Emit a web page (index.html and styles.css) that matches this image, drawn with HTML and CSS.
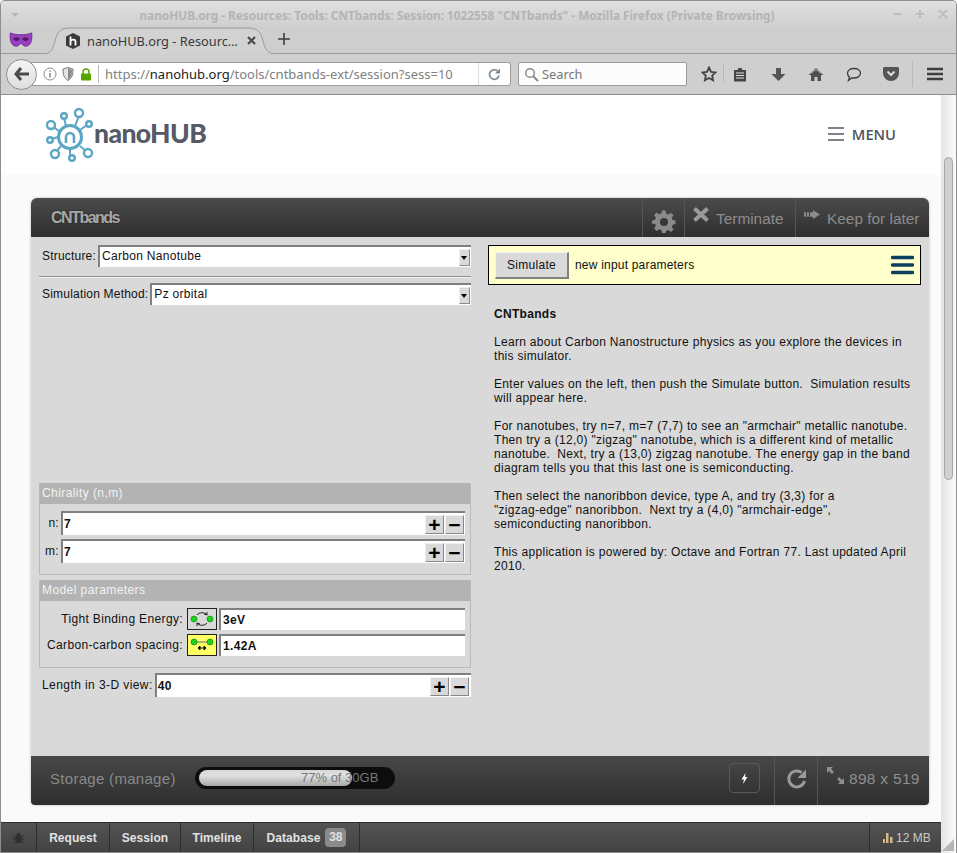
FILE: index.html
```html
<!DOCTYPE html>
<html lang="en">
<head>
	<meta charset="utf-8">
	<title>nanoHUB.org - Resources: Tools: CNTbands</title>
	<link rel="stylesheet" href="styles.css">
</head>
<body>
<div class="window">
	<div class="titlebar">
		<svg class="title-arrow" width="10" height="6" viewBox="0 0 10 6"><path d="M1 1h8L5 5z" fill="#b5b5b5"/></svg>
		<div class="title-text">nanoHUB.org - Resources: Tools: CNTbands: Session: 1022558 "CNTbands" - Mozilla Firefox (Private Browsing)</div>
		<div class="title-btns">
			<svg width="60" height="12" viewBox="0 0 60 12" fill="none" stroke="#bdbdbd" stroke-width="2"><path d="M1 6h8M23 6h8M27 2v8M46 2l8 8M54 2l-8 8"/></svg>
		</div>
	</div>

	<div class="tabbar">
		<svg class="mask" width="24" height="16" viewBox="0 0 26 18"><path d="M1 1c5 2 8 2 12 2s7 0 12-2c1 8-1 15-7 15-3 0-3-3-5-3s-2 3-5 3C2 16 0 9 1 1z" fill="#9b3fc2" stroke="#6d2a8c"/><ellipse cx="8" cy="8" rx="3.5" ry="2" fill="#4c1d66"/><ellipse cx="18" cy="8" rx="3.5" ry="2" fill="#4c1d66"/></svg>
		<div class="tab">
			<svg class="tab-shape" width="234" height="28" viewBox="0 0 234 28"><path d="M0 27C8 27 10 22 12 14 14 5 18 1 26 1H206C214 1 218 5 220 14 222 22 224 27 234 27" fill="#d2d2d2" stroke="#9a9a9a"/></svg>
			<svg class="favicon" width="16" height="16" viewBox="0 0 16 16"><path d="M8 0l7 3.5v9L8 16l-7-3.5v-9z" fill="#3a3a3a"/><path d="M5.5 3.5v9M5.5 8c1-2 5-2 5 .5v4" fill="none" stroke="#fff" stroke-width="1.8"/></svg>
			<span class="tab-label">nanoHUB.org - Resourc…</span>
			<svg class="tab-close" width="9" height="9" viewBox="0 0 9 9"><path d="M1 1l7 7M8 1L1 8" stroke="#4a4a4a" stroke-width="2.2"/></svg>
		</div>
		<svg class="tab-plus" width="12" height="12" viewBox="0 0 12 12"><path d="M6 0v12M0 6h12" stroke="#3d3d3d" stroke-width="1.6"/></svg>
	</div>

	<div class="navbar">
		<div class="back"><svg width="16" height="14" viewBox="0 0 16 14"><path d="M7 1L2 7l5 6M2 7h13" fill="none" stroke="#4a4a4a" stroke-width="3"/></svg></div>
		<div class="urlbar">
			<svg class="ic-info" width="14" height="14" viewBox="0 0 14 14" fill="none"><circle cx="7" cy="7" r="6" stroke="#8c8c8c"/><path d="M7 6v4.5M7 3.5v1.3" stroke="#7a7a7a" stroke-width="1.4"/></svg>
			<svg class="ic-shield" width="12" height="14" viewBox="0 0 12 14"><path d="M1 2l5-1.500 5 1.500c0 6-1 9-5 11.500C2 11 1 8 1 2z" fill="#e6e6e6" stroke="#777"/><path d="M6 1v12c3-2 4-5 4-10z" fill="#8a8a8a"/></svg>
			<svg class="ic-lock" width="12" height="13" viewBox="0 0 12 13"><rect x="1" y="5.500" width="10" height="7" rx="1" fill="#57a300"/><path d="M3 6V4a3 3 0 0 1 6 0v2" fill="none" stroke="#57a300" stroke-width="1.500"/></svg>
			<div class="url-text">https://<b>nanohub.org</b>/tools/cntbands-ext/session?sess=102</div>
			<div class="url-reload"><svg width="13" height="13" viewBox="0 0 13 13" fill="none"><path d="M11 7.500A4.800 4.800 0 1 1 9.500 3" stroke="#7d8a94" stroke-width="1.700"/><path d="M12 .5v5H7z" fill="#7d8a94"/></svg></div>
		</div>
		<div class="searchbar">
			<svg width="15" height="15" viewBox="0 0 15 15" fill="none"><circle cx="6" cy="6" r="4.300" stroke="#8b8b8b" stroke-width="1.500"/><path d="M9 9l5 5" stroke="#8b8b8b" stroke-width="2"/></svg>
			<span>Search</span>
		</div>
		<div class="tools">
			<svg class="t-star" width="16" height="16" viewBox="0 0 16 16"><path d="M8 1.500l2 4.300 4.600.6-3.400 3.200.9 4.700L8 12l-4.100 2.300.9-4.700L1.400 6.400 6 5.800z" fill="none" stroke="#444" stroke-width="1.800"/></svg>
			<i class="t-sep"></i>
			<svg class="t-clip" width="14" height="15" viewBox="0 0 14 15"><path d="M1 3h3.500l1-2h3l1 2H13v11.500H1z" fill="#444"/><path d="M3 6h8M3 8.500h8M3 11h8" stroke="#ddd"/></svg>
			<svg class="t-down" width="15" height="15" viewBox="0 0 15 15"><path d="M5 1h5v6h4.500l-7 7-7-7H5z" fill="#555"/></svg>
			<svg class="t-home" width="16" height="15" viewBox="0 0 16 15"><path d="M8 1L.5 8H3v6h3.500v-4h3v4H13V8h2.500z" fill="#4f4f4f"/><path d="M2.500 6.500L8 2.500l5.500 4" fill="none" stroke="#d0d0d0" stroke-width=".8"/></svg>
			<svg class="t-chat" width="16" height="15" viewBox="0 0 16 15"><path d="M8 1.500c3.700 0 6.500 2 6.500 4.700S11.700 11 8 11c-.7 0-1.400 0-2-.2L2.500 13.500l1-3.500C2.300 9 1.500 7.700 1.500 6.200 1.500 3.500 4.300 1.500 8 1.500z" fill="none" stroke="#3c3c3c" stroke-width="1.300"/></svg>
			<svg class="t-pocket" width="16" height="14" viewBox="0 0 16 14"><path d="M1.500 0h13A1.500 1.500 0 0 1 16 1.500V6a8 8 0 0 1-16 0V1.500A1.500 1.500 0 0 1 1.500 0z" fill="#555"/><path d="M4.500 4.500L8 8l3.500-3.500" fill="none" stroke="#ddd" stroke-width="2"/></svg>
			<i class="t-sep t-sep-last"></i>
			<svg class="t-menu" width="16" height="14" viewBox="0 0 16 14"><path d="M0 2h16M0 7h16M0 12h16" stroke="#3f3f3f" stroke-width="2.400"/></svg>
		</div>
	</div>

	<div class="viewport">
		<div class="page">
			<header class="site-header">
				<a class="logo">
					<svg width="52" height="58" viewBox="44 106 52 58" fill="none" stroke="#5ba6c4">
						<circle cx="70" cy="137" r="11.500" stroke-width="3"/>
						<path d="M75 126l4-10M66 126l-2-8M80 130l7-5M59 131l-7-5M58 137l-6 2M61 146l-5 6M70 149v6M80 146l6 5" stroke-width="2"/>
						<g stroke-width="2.400" fill="#fff">
							<circle cx="79" cy="113" r="4"/><circle cx="64" cy="116" r="2.800"/><circle cx="89" cy="124" r="2.800"/>
							<circle cx="51" cy="125" r="4"/><circle cx="50" cy="140" r="2.800"/><circle cx="55" cy="154" r="4"/>
							<circle cx="72" cy="158" r="2.800"/><circle cx="88" cy="153" r="4"/>
						</g>
						<path d="M66 143v-6a4 4 0 0 1 8 0v6" stroke-width="2.600"/>
					</svg>
					<span class="logo-name">nanoHUB</span>
				</a>
				<a class="menu-link">
					<svg width="16" height="14" viewBox="0 0 16 14"><path d="M0 1h16M0 7h16M0 13h16" stroke="#555a66" stroke-width="1.600"/></svg>
					<span>MENU</span>
				</a>
			</header>

			<main class="content">
				<section class="panel">
					<div class="panel-head">
						<h1 class="panel-title">CNTbands</h1>
						<div class="head-actions">
							<div class="head-btn btn-gear">
								<svg width="24" height="24" viewBox="0 0 24 24"><path d="M10 0h4l.7 3.500 2.300 1 3-2 2.800 2.800-2 3 1 2.300L25 11v4l-3.200.7-1 2.300 2 3-2.800 2.800-3-2-2.300 1L14 25h-4l-.7-3.200-2.300-1-3 2-2.800-2.800 2-3-1-2.300L-1 15v-4l3.200-.7 1-2.300-2-3L4 2.200l3 2 2.300-1z" fill="#8a8a8a" transform="translate(1 .5) scale(.9)"/><circle cx="12" cy="12" r="4" fill="#383838"/></svg>
							</div>
							<div class="head-btn btn-term">
								<svg width="18" height="17" viewBox="0 0 18 17"><path d="M2.500 2.500l13 12M15.500 2.500l-13 12" stroke="#9a9a9a" stroke-width="4"/></svg>
								<span>Terminate</span>
							</div>
							<div class="head-btn btn-keep">
								<svg width="17" height="9" viewBox="0 0 17 12" preserveAspectRatio="none"><path d="M0 3h2v6H0zM3 3h2v6H3zM6 3h3V0l7 6-7 6V9H6z" fill="#8c8c8c"/></svg>
								<span>Keep for later</span>
							</div>
						</div>
					</div>

					<div class="panel-body">
						<div class="inputs">
							<div class="row row-top">
								<label>Structure:</label>
								<div class="combo"><span>Carbon Nanotube</span><i class="combo-arrow"></i></div>
							</div>
							<div class="divider"></div>
							<div class="row row-top">
								<label>Simulation Method:</label>
								<div class="combo"><span>Pz orbital</span><i class="combo-arrow"></i></div>
							</div>

							<div class="group group-chirality">
								<div class="group-title">Chirality (n,m)</div>
								<div class="group-body">
									<div class="row row-n">
										<label>n:</label>
										<div class="spin"><b>7</b><i class="sbtn">+</i><i class="sbtn">−</i></div>
									</div>
									<div class="row row-n">
										<label>m:</label>
										<div class="spin"><b>7</b><i class="sbtn">+</i><i class="sbtn">−</i></div>
									</div>
								</div>
							</div>

							<div class="group group-model">
								<div class="group-title">Model parameters</div>
								<div class="group-body">
									<div class="row row-param">
										<label>Tight Binding Energy:</label>
										<div class="pic">
											<svg width="24" height="16" viewBox="0 0 24 16"><path d="M7 4c2-3 8-3 10 0M14 3l3 1 0-3M17 12c-2 3-8 3-10 0M10 13l-3-1 0 3" fill="none" stroke="#222"/><circle cx="4" cy="8" r="3" fill="#1bd41b" stroke="#0a7a0a" stroke-width=".6"/><circle cx="20" cy="8" r="3" fill="#1bd41b" stroke="#0a7a0a" stroke-width=".6"/></svg>
										</div>
										<div class="field"><b>3eV</b></div>
									</div>
									<div class="row row-param">
										<label>Carbon-carbon spacing:</label>
										<div class="pic pic-on">
											<svg width="24" height="16" viewBox="0 0 24 16"><path d="M4 5h16" stroke="#666"/><path d="M8 11h8M8 11l2-2v4zM16 11l-2-2v4z" stroke="#111"/><circle cx="4" cy="5" r="3" fill="#1bd41b" stroke="#0a7a0a" stroke-width=".6"/><circle cx="20" cy="5" r="3" fill="#1bd41b" stroke="#0a7a0a" stroke-width=".6"/></svg>
										</div>
										<div class="field"><b>1.42A</b></div>
									</div>
								</div>
							</div>

							<div class="row row-length">
								<label>Length in 3-D view:</label>
								<div class="spin"><b>40</b><i class="sbtn">+</i><i class="sbtn">−</i></div>
							</div>
						</div>

						<div class="results">
							<div class="simbar">
								<div class="sim-btn">Simulate</div>
								<span class="sim-note">new input parameters</span>
								<svg class="sim-menu" width="23" height="20" viewBox="0 0 23 20"><path d="M1.500 2.500h20M1.500 10h20M1.500 17.500h20" stroke="#0b415f" stroke-width="3.400" stroke-linecap="round"/></svg>
							</div>
							<div class="about">
								<p><b>CNTbands</b></p>
								<p>Learn about Carbon Nanostructure physics as you explore the devices in<br>this simulator.</p>
								<p>Enter values on the left, then push the Simulate button.&nbsp; Simulation results<br>will appear here.</p>
								<p>For nanotubes, try n=7, m=7 (7,7) to see an "armchair" metallic nanotube.<br>Then try a (12,0) "zigzag" nanotube, which is a different kind of metallic<br>nanotube.&nbsp; Next, try a (13,0) zigzag nanotube. The energy gap in the band<br>diagram tells you that this last one is semiconducting.</p>
								<p>Then select the nanoribbon device, type A, and try (3,3) for a<br>"zigzag-edge" nanoribbon.&nbsp; Next try a (4,0) "armchair-edge",<br>semiconducting nanoribbon.</p>
								<p>This application is powered by: Octave and Fortran 77. Last updated April<br>2010.</p>
							</div>
						</div>
					</div>

					<div class="panel-foot">
						<span class="storage-label">Storage (manage)</span>
						<div class="meter">
							<div class="meter-fill"></div>
							<span class="meter-text">77% of 30GB</span>
						</div>
						<div class="foot-right">
							<div class="flash"><svg width="7" height="11" viewBox="0 0 7 11"><path d="M4.500 0L.5 6.500H3L2 11l4.500-7H4z" fill="#fff"/></svg></div>
							<div class="foot-reload"><svg width="22" height="22" viewBox="0 0 22 22" fill="none"><path d="M18.500 13A8 8 0 1 1 15.500 4.500" stroke="#9a9a9a" stroke-width="3"/><path d="M20 1.500V10h-8.500z" fill="#9a9a9a"/></svg></div>
							<div class="foot-size">
								<svg width="17" height="17" viewBox="0 0 17 17"><path d="M0 0h6L4 2l3 3-2 2-3-3-2 2zM17 17h-6l2-2-3-3 2-2 3 3 2-2z" fill="#8f8f8f"/></svg>
								<span>898 x 519</span>
							</div>
						</div>
					</div>
				</section>
			</main>

			<footer class="debugbar">
				<div class="dbg dbg-bug"><svg width="13" height="12" viewBox="0 0 13 12"><ellipse cx="6.500" cy="7" rx="3.200" ry="4.200" fill="#2e2e2e"/><circle cx="6.500" cy="2.500" r="1.800" fill="#2e2e2e"/><path d="M1 3l3 2M12 3L9 5M.5 7h3M12.500 7h-3M1 11l3-2M12 11L9 9" stroke="#2e2e2e"/></svg></div>
				<div class="dbg dbg-request">Request</div>
				<div class="dbg dbg-session">Session</div>
				<div class="dbg dbg-timeline">Timeline</div>
				<div class="dbg dbg-database">Database <span class="badge">38</span></div>
				<div class="dbg-mem">
					<svg width="10" height="10" viewBox="0 0 10 10"><path d="M0 6h2v4H0zM3 0h2.500v10H3zM7 4h2.500v6H7z" fill="#d6b98a"/></svg>
					<span>12 MB</span>
				</div>
			</footer>
		</div>

		<div class="scrollbar"><div class="thumb"></div></div>
		<svg class="grip" width="14" height="14" viewBox="0 0 14 14"><path d="M1 13L13 1v12z" fill="#b5b5b5"/></svg>
	</div>
</div>
</body>
</html>
```

FILE: styles.css
```css
*{
	margin: 0;
	box-sizing: border-box;
}

body{
	margin: 0;
	width: 957px;
	height: 853px;
	overflow: hidden;
	font-family: 'Liberation Sans', sans-serif;
	background: #fff;
}

.window{
	display: flex;
	flex-direction: column;
	height: 853px;
	border: 1px solid #8e8e8e;
	border-bottom: 0;
	border-radius: 5px 5px 0 0;
	overflow: hidden;
}

/* title bar */
.titlebar{
	display: flex;
	align-items: center;
	height: 26px;
	padding: 1px 0 0 9px;
	background: linear-gradient(180deg, #e0e0e0 0%, #cfcfcf 100%);
}

.title-arrow{
	flex: none;
}

.title-text{
	flex: 1;
	text-align: center;
	font: 700 11.8px 'Noto Sans', sans-serif;
	color: #b4b4b4;
	white-space: nowrap;
	padding-left: 16px;
}

.title-btns{
	flex: none;
	width: 78px;
	padding-left: 15px;
}

/* tabs */
.tabbar{
	display: flex;
	align-items: flex-end;
	height: 27px;
	background: #cecece;
	border-bottom: 1px solid #9a9a9a;
	position: relative;
}

.mask{
	flex: none;
	margin: 0 0 5px 8px;
}

.tab{
	position: relative;
	display: flex;
	align-items: center;
	width: 234px;
	height: 27px;
	margin: 0 0 -1px 10px;
	padding: 0 0 0 22px;
}

.tab-shape{
	position: absolute;
	left: 0;
	top: 0;
}

.favicon,
.tab-label,
.tab-close{
	position: relative;
	flex: none;
}

.tab-label{
	width: 153px;
	margin-left: 6px;
	font: 12.8px 'Noto Sans', sans-serif;
	color: #3a3a3a;
	white-space: nowrap;
}

.tab-close{
	margin-left: 7px;
}

.tab-plus{
	flex: none;
	margin: 0 0 8px 1px;
}

/* nav */
.navbar{
	display: flex;
	align-items: center;
	height: 41px;
	padding: 0 0 0 5px;
	background: #cfcfcf;
	border-bottom: 1px solid #8f8f8f;
	position: relative;
}

.back{
	position: relative;
	z-index: 1;
	display: flex;
	align-items: center;
	justify-content: center;
	flex: none;
	width: 31px;
	height: 31px;
	border: 1px solid #8f8f8f;
	border-radius: 50%;
	background: linear-gradient(180deg, #f4f4f4, #dedede);
}

.urlbar{
	display: flex;
	align-items: center;
	flex: none;
	width: 480px;
	height: 24px;
	margin-left: -6px;
	padding-left: 12px;
	background: #fff;
	border: 1px solid #9b9b9b;
	border-left: 0;
	border-radius: 0 3px 3px 0;
}

.ic-shield{
	margin-left: 5px;
}

.ic-lock{
	margin-left: 6px;
}

.url-text{
	flex: none;
	width: 355px;
	height: 18px;
	overflow: hidden;
	margin-left: 6px;
	padding-left: 6px;
	border-left: 1px solid #bbb;
	font: 13px/18px 'Noto Sans', sans-serif;
	color: #808080;
	white-space: nowrap;
}

.url-text b{
	font-weight: 400;
	color: #222;
}

.url-reload{
	display: flex;
	align-items: center;
	justify-content: center;
	flex: 1;
	height: 22px;
	margin-left: 25px;
	border-left: 1px solid #ddd;
}

.searchbar{
	display: flex;
	align-items: center;
	gap: 3px;
	flex: none;
	width: 169px;
	height: 24px;
	margin-left: 7px;
	padding-left: 5px;
	background: #fcfcfc;
	border: 1px solid #9b9b9b;
	border-radius: 2px;
	font: 12.8px 'Noto Sans', sans-serif;
	color: #777;
}

.tools{
	display: flex;
	align-items: center;
	flex: none;
	height: 100%;
	margin-left: 14px;
}

.t-sep{
	display: block;
	flex: none;
	width: 1px;
	height: 18px;
	margin: 0 9px 0 6px;
	background: #b7b7b7;
}

.t-down{
	margin-left: 24px;
}

.t-home{
	margin-left: 22px;
}

.t-chat{
	margin-left: 22px;
}

.t-pocket{
	margin-left: 21px;
}

.t-sep-last{
	height: 26px;
	margin: 0 14px 0 13px;
}

/* page */
.viewport{
	position: relative;
	display: flex;
	flex: 1;
	min-height: 0;
}

.page{
	display: flex;
	flex-direction: column;
	width: 940px;
	background: #fafafa;
}

.site-header{
	display: flex;
	align-items: center;
	justify-content: space-between;
	flex: none;
	height: 80px;
	padding: 0 45px 0 43px;
	background: #fff;
}

.logo{
	display: flex;
	align-items: center;
}

.logo-name{
	margin: -4px 0 0 -2px;
	font: 900 26.5px 'Lato', sans-serif;
	color: #555a66;
	letter-spacing: -0.6px;
}

.menu-link{
	display: flex;
	align-items: center;
	gap: 8px;
	margin-top: -2px;
	font: 600 14.7px 'Open Sans', sans-serif;
	color: #4f5560;
}

.content{
	flex: 1;
	min-height: 0;
	padding: 23px 12px 0 30px;
}

.panel{
	display: flex;
	flex-direction: column;
	height: 607px;
	border-radius: 6px 6px 4px 4px;
	overflow: hidden;
	box-shadow: 0 0 3px rgba(0, 0, 0, 0.25);
}

.panel-head{
	display: flex;
	justify-content: space-between;
	flex: none;
	height: 39px;
	background: linear-gradient(180deg, #4b4b4b 0%, #2f2f2f 100%);
}

.panel-title{
	padding: 11px 0 0 20px;
	font: 700 16px 'Liberation Sans', sans-serif;
	letter-spacing: -1.5px;
	color: #a8a8a8;
	text-shadow: 0 0 2px rgba(0, 0, 0, 0.6);
}

.head-actions{
	display: flex;
}

.head-btn{
	display: flex;
	align-items: center;
	height: 100%;
	border-left: 1px solid #555;
	font-size: 15.4px;
	color: #8c8c8c;
}

.btn-gear{
	width: 42px;
	padding: 9px 0 0 9px;
}

.btn-term{
	width: 111px;
	padding: 2px 0 0 7px;
	gap: 6px;
}

.btn-term svg{
	margin-top: -9px;
}

.btn-keep{
	width: 134px;
	padding: 2px 0 0 8px;
	gap: 6px;
}

.btn-keep svg{
	margin-top: -9px;
}

.panel-body{
	display: flex;
	flex: 1;
	min-height: 0;
	background: #d9d9d9;
	font-size: 12px;
	letter-spacing: 0.3px;
	color: #111;
}

.inputs{
	flex: none;
	width: 440px;
	padding: 8px 0 0 8px;
}

.row{
	display: flex;
	align-items: center;
}

.row label{
	flex: none;
	padding-left: 3px;
	margin-right: 2px;
}

.row-top label{
	letter-spacing: 0.2px;
}

.combo{
	display: flex;
	align-items: center;
	justify-content: space-between;
	flex: 1;
	height: 22px;
	padding: 0 1px 2px 2px;
	background: #fff;
	border-top: 2px solid #808080;
	border-left: 2px solid #808080;
}

.combo-arrow{
	display: block;
	position: relative;
	width: 11px;
	height: 17px;
	margin-top: 2px;
	background: #d9d9d9;
	border: 1px solid #8a8a8a;
	border-top-color: #eee;
	border-left-color: #eee;
}

.combo-arrow::after{
	content: "";
	position: absolute;
	left: 1px;
	top: 6px;
	border: 3.5px solid transparent;
	border-top: 4px solid #000;
	border-bottom: 0;
}

.divider{
	height: 2px;
	margin: 9px 0 5px;
	background: #8f8f8f;
	border-bottom: 1px solid #f2f2f2;
}

.group{
	border: 1px solid #b9b9b9;
	border-top: 0;
}

.group-chirality{
	margin-top: 178px;
	height: 92px;
}

.group-model{
	margin-top: 5px;
	height: 88px;
}

.group-title{
	height: 21px;
	padding: 3px 0 0 2px;
	background: #b3b3b3;
	color: #f2f2f2;
	letter-spacing: 0.42px;
}

.group-chirality .group-body{
	padding: 7px 5px 0 0;
}

.group-model .group-body{
	padding: 6px 5px 0 0;
}

.row-n{
	height: 24px;
	margin-bottom: 4px;
}

.row-n label{
	flex: none;
	width: 19px;
	padding: 0;
	margin: 0 2px 0 0;
	text-align: right;
}

.spin{
	display: flex;
	align-items: center;
	flex: 1;
	height: 24px;
	padding-left: 1px;
	background: #fff;
	border-top: 2px solid #808080;
	border-left: 2px solid #808080;
	font-weight: 700;
}

.spin b{
	flex: 1;
}

.sbtn{
	display: flex;
	align-items: center;
	justify-content: center;
	flex: none;
	width: 19px;
	height: 19px;
	margin-right: 1px;
	background: #d9d9d9;
	border: 1px solid #888;
	border-top-color: #f0f0f0;
	border-left-color: #f0f0f0;
	font: 700 21px/1 'Liberation Sans', sans-serif;
	color: #000;
}

.row-param{
	height: 24px;
	margin-bottom: 2px;
	letter-spacing: 0.36px;
}

.row-param label{
	width: 143px;
	padding: 0;
	margin: 0 4px 0 0;
	text-align: right;
	white-space: nowrap;
}

.pic{
	display: flex;
	align-items: center;
	justify-content: center;
	flex: none;
	width: 30px;
	height: 22px;
	margin-right: 2px;
	background: #d9d9d9;
	border: 1px solid #222;
}

.pic-on{
	background: #ffff66;
}

.field{
	display: flex;
	align-items: center;
	flex: 1;
	height: 22px;
	padding-left: 2px;
	background: #fff;
	border-top: 2px solid #808080;
	border-left: 2px solid #808080;
}

.row-length{
	margin-top: 5px;
	letter-spacing: 0.42px;
}

.row-length .spin{
	padding-right: 1px;
}

.results{
	flex: none;
	width: 433px;
	margin-left: 17px;
	padding-top: 8px;
}

.simbar{
	display: flex;
	align-items: center;
	height: 40px;
	padding: 0 6px 0 6px;
	background: #ffffcc;
	border: 1px solid #000;
}

.sim-btn{
	flex: none;
	width: 74px;
	height: 27px;
	line-height: 25px;
	text-align: center;
	background: #d9d9d9;
	border: 1px solid #808080;
	border-top-color: #f2f2f2;
	border-left-color: #f2f2f2;
	border-width: 1px 2px 2px 1px;
}

.sim-note{
	flex: 1;
	margin-left: 6px;
	letter-spacing: 0.2px;
}

.sim-menu{
	flex: none;
}

.about{
	padding: 22px 0 0 6px;
	line-height: 14px;
	white-space: nowrap;
}

.about p{
	margin-bottom: 14px;
}

.panel-foot{
	display: flex;
	align-items: center;
	flex: none;
	height: 49px;
	padding-left: 19px;
	background: linear-gradient(180deg, #484848 0%, #2e2e2e 100%);
}

.storage-label{
	flex: none;
	width: 145px;
	margin-top: -5px;
	font-size: 15px;
	letter-spacing: 0.3px;
	color: #8a8a8a;
}

.meter{
	position: relative;
	flex: none;
	width: 200px;
	height: 22px;
	margin-top: -6px;
	padding: 3px 4px;
	background: #0d0d0d;
	border-radius: 11px;
}

.meter-fill{
	width: 153px;
	height: 16px;
	border-radius: 8px;
	background: linear-gradient(180deg, #d8d8d8 0%, #e0e0e0 35%, #a8a8a8 100%);
}

.meter-text{
	position: absolute;
	left: 106px;
	top: 3px;
	font-size: 13px;
	line-height: 16px;
	color: #777;
}

.foot-right{
	display: flex;
	align-items: center;
	margin-left: auto;
	height: 100%;
}

.flash{
	display: flex;
	align-items: center;
	justify-content: center;
	flex: none;
	width: 31px;
	height: 30px;
	margin: -5px 14px 0 0;
	border: 1px solid #5a5a5a;
	border-radius: 4px;
}

.foot-reload{
	display: flex;
	align-items: center;
	justify-content: center;
	flex: none;
	width: 44px;
	height: 100%;
	padding: 0 0 3px 2px;
	border-left: 1px solid #555;
	border-right: 1px solid #555;
}

.foot-size{
	display: flex;
	align-items: center;
	gap: 5px;
	flex: none;
	width: 111px;
	padding: 0 0 3px 9px;
	font-size: 15.5px;
	letter-spacing: 0.3px;
	color: #8f8f8f;
}

.foot-size svg{
	margin-top: -8px;
}

/* debug toolbar */
.debugbar{
	display: flex;
	align-items: stretch;
	flex: none;
	height: 31px;
	background: linear-gradient(180deg, #545454 0%, #424242 100%);
	border-top: 1px solid #2d2d2d;
	border-bottom: 1px solid #8a8a8a;
	font-size: 12px;
	font-weight: 700;
	letter-spacing: 0.05px;
	color: #e2e2e2;
}

.dbg{
	display: flex;
	align-items: center;
	justify-content: center;
	flex: none;
	border-right: 1px solid #2d2d2d;
}

.dbg-bug{
	width: 36px;
}

.dbg-request{
	width: 73px;
}

.dbg-session{
	width: 71px;
}

.dbg-timeline{
	width: 73px;
}

.dbg-database{
	width: 106px;
	gap: 5px;
}

.badge{
	display: inline-block;
	width: 21px;
	height: 19px;
	line-height: 19px;
	text-align: center;
	background: #8a8a8a;
	border-radius: 4px;
	letter-spacing: 0;
}

.dbg-mem{
	display: flex;
	align-items: center;
	gap: 3px;
	margin-left: auto;
	width: 72px;
	padding-left: 13px;
	border-left: 1px solid #2d2d2d;
	font-weight: 400;
	letter-spacing: 0;
	color: #c9c9c9;
}

.scrollbar{
	flex: 1;
	position: relative;
	padding: 62px 3px 0 3px;
	background: linear-gradient(90deg, #e4e4e4, #fbfbfb);
}

.thumb{
	width: 9px;
	height: 323px;
	border: 1px solid #a6a6a6;
	border-radius: 5px;
	background: #d0d0d0;
}

.grip{
	position: absolute;
	right: 1px;
	bottom: 1px;
}
```
